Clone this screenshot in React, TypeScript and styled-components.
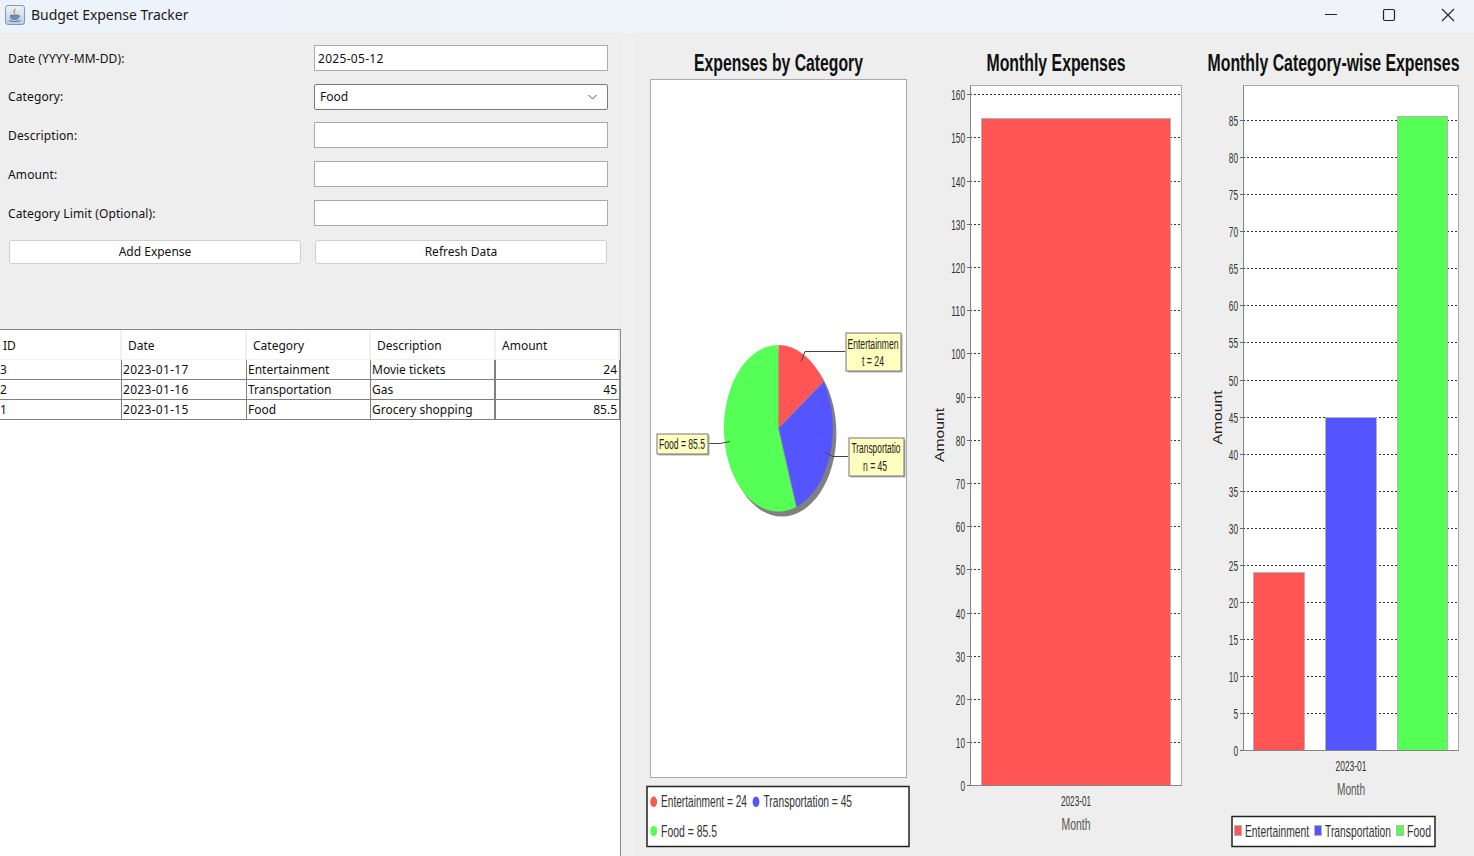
import React from "react";
import styled, { createGlobalStyle } from "styled-components";

const GlobalStyle = createGlobalStyle`
  html, body { margin: 0; padding: 0; height: 100%; overflow: hidden; background: #eeeeee; }
  * { box-sizing: border-box; }
`;

const UI_FONT = `"Noto Sans", "Liberation Sans", sans-serif`;
const CHART_FONT = `"Liberation Sans", Arial, sans-serif`;

const Window = styled.div`
  width: 1474px;
  height: 856px;
  display: flex;
  flex-direction: column;
  overflow: hidden;
  font-family: ${UI_FONT};
  color: #111;
`;

const TitleBar = styled.div`
  height: 33px;
  flex: none;
  display: flex;
  align-items: center;
  padding: 0 3px 4px 5px;
  background: linear-gradient(90deg, #edf3fb, #f1f3f8);
`;

const AppTitle = styled.div`
  margin-left: 6px;
  flex: 1;
  font-size: 14px;
  letter-spacing: -0.05px;
  color: #1a1a1a;
`;

const ControlSlot = styled.div`
  width: 46px;
  height: 20px;
  display: flex;
  align-items: center;
  justify-content: center;
  & + & { margin-left: 12px; }
  &:last-child { margin-left: 13px; }
`;

const Body = styled.div`
  flex: 1;
  display: flex;
  min-height: 0;
`;

const LeftPanel = styled.div`
  width: 621px;
  flex: none;
  display: flex;
  flex-direction: column;
  background: #eeeeee;
`;

const Form = styled.div`
  height: 296px;
  flex: none;
  padding: 11.9px 13px 0 8px;
`;

const Row = styled.div`
  height: 38.75px;
  display: grid;
  grid-template-columns: 306px 294px;
  align-items: start;
`;

const Label = styled.label<{ $tight?: boolean }>`
  font-size: 12px;
  line-height: ${(p) => (p.$tight ? "26px" : "27px")};
  letter-spacing: 0.12px;
  color: #111;
`;

const TextInput = styled.input`
  width: 294px;
  height: 26px;
  padding: 1px 3px 0;
  border: 1px solid #ababab;
  border-radius: 0;
  background: #fff;
  outline: none;
  font: 12px ${UI_FONT};
  letter-spacing: 0.3px;
  color: #111;
`;

const SelectBox = styled.div`
  width: 294px;
  height: 26px;
  padding: 0 10px 0 5px;
  display: flex;
  align-items: center;
  justify-content: space-between;
  border: 1px solid #7a7a7a;
  border-radius: 2px;
  background: #fff;
  font-size: 12px;
`;

const Buttons = styled.div`
  margin-top: 1px;
  padding-left: 1px;
  display: flex;
  gap: 14px;
`;

const Button = styled.button`
  width: 292px;
  height: 24px;
  padding: 0;
  border: 1px solid #d0d0d0;
  border-radius: 3px;
  background: #fff;
  font: 12px ${UI_FONT};
  color: #111;
`;

const TableWrap = styled.div`
  flex: 1;
  overflow: hidden;
  background: #fff;
  border-top: 1px solid #8a8a8a;
  border-right: 1px solid #8a8a8a;
`;

const Table = styled.table`
  margin-left: -2px;
  width: 622px;
  table-layout: fixed;
  border-collapse: separate;
  border-spacing: 0;
  font-size: 12px;
`;

const HeadCell = styled.th`
  height: 30px;
  padding: 2px 0 0 6px;
  text-align: left;
  font-weight: 400;
  background: #fff;
  border-right: 2px solid #f0f0f0;
  border-bottom: 1px solid #f0f0f0;
  &:first-child { padding-left: 5px; }
`;

const Cell = styled.td<{ $numeric?: boolean; $date?: boolean }>`
  height: 20px;
  padding: 0 ${(p) => (p.$numeric ? "2px" : "0")} 0 ${(p) => (p.$numeric ? "0" : "1px")};
  text-align: ${(p) => (p.$numeric ? "right" : "left")};
  letter-spacing: ${(p) => (p.$date ? "0.3px" : "0")};
  white-space: nowrap;
  overflow: hidden;
  border-right: 1px solid #808080;
  border-bottom: 1px solid #808080;
  &:first-child { padding-left: 2px; }
  &:nth-child(4) { border-right-width: 2px; }
`;

const RightPanel = styled.div`
  flex: 1;
  display: flex;
  padding-left: 13px;
  background: #f0f0f0;
`;

const ChartSvg = styled.svg`
  display: block;
  height: 823px;
  flex: none;
  background: #eeeeee;
`;

const ChartTitle = styled.text`
  font: 700 23px ${CHART_FONT};
  fill: #111;
`;

const TickLabel = styled.text`
  font: 15px ${CHART_FONT};
  fill: #333;
`;

const AxisTitle = styled.text`
  font: 16px ${CHART_FONT};
  fill: #555;
`;

const RangeTitle = styled.text`
  font: 13px ${CHART_FONT};
  fill: #222;
`;

const LegendText = styled.text`
  font: 17px ${CHART_FONT};
  fill: #333;
`;

const PieLabelText = styled.text`
  font: 14px ${CHART_FONT};
  fill: #222;
`;

const RED = "#ff5555";
const BLUE = "#5555ff";
const GREEN = "#55ff55";

const JavaIcon = () => (
  <svg width="20" height="20" viewBox="0 0 20 20">
    <defs>
      <linearGradient id="java-bg" x1="0" y1="0" x2="0" y2="1">
        <stop offset="0" stopColor="#eef3f8" />
        <stop offset="1" stopColor="#b9cde0" />
      </linearGradient>
    </defs>
    <rect x="0.5" y="0.5" width="19" height="19" rx="2.5" fill="url(#java-bg)" stroke="#7f9ab5" />
    <path d="M10.5 3c1 1.6-1.6 2.6-.6 4.4.4.7.8 1 .6 1.8-1.6-1-2.9-2-1.9-3.6.5-.8 1.7-1.4 1.9-2.6z" fill="#e2701f" />
    <path d="M5.5 10h8v2.2c0 1.5-1.3 2.3-4 2.3s-4-.8-4-2.3z" fill="#6e8fb0" stroke="#4d6c8c" strokeWidth="0.6" />
    <path d="M13.5 10.6c1.6-.3 1.9 1.6-.3 2" fill="none" stroke="#4d6c8c" strokeWidth="0.8" />
    <path d="M4 15.6c2.6 1.2 8.6 1.2 11.4 0" fill="none" stroke="#4d6c8c" strokeWidth="1" />
  </svg>
);

const MinimizeIcon = () => (
  <svg width="14" height="14" viewBox="0 0 14 14">
    <path d="M1 6.5h12" stroke="#222" strokeWidth="1" />
  </svg>
);

const MaximizeIcon = () => (
  <svg width="14" height="14" viewBox="0 0 14 14">
    <rect x="1.5" y="1.5" width="11" height="11" rx="1.5" fill="none" stroke="#222" strokeWidth="1.2" />
  </svg>
);

const CloseIcon = () => (
  <svg width="14" height="14" viewBox="0 0 14 14">
    <path d="M1 1l12 12M13 1L1 13" stroke="#222" strokeWidth="1.1" />
  </svg>
);

const Chevron = () => (
  <svg width="9" height="6" viewBox="0 0 9 6">
    <path d="M.5 1l4 4 4-4" fill="none" stroke="#555" strokeWidth="1" />
  </svg>
);

interface BarSpec {
  x1: number;
  x2: number;
  value: number;
  color: string;
}

interface BarPlotProps {
  left: number;
  right: number;
  top: number;
  bottom: number;
  perUnit: number;
  step: number;
  max: number;
  bars: BarSpec[];
}

// plot frame, dotted grid, ticks, value labels and the bars
const BarPlot = ({ left, right, top, bottom, perUnit, step, max, bars }: BarPlotProps) => {
  const ticks: number[] = [];
  for (let v = 0; v <= max; v += step) ticks.push(v);
  return (
    <g>
      <rect x={left + 0.5} y={top + 0.5} width={right - left} height={bottom - top} fill="#fff" stroke="#ababab" />
      {ticks.map((v) => {
        const y = Math.round(bottom - v * perUnit + 0.3) + 0.5;
        const label = String(v);
        return (
          <g key={v}>
            {v > 0 && (
              <line x1={left} x2={right} y1={y} y2={y} stroke="#333" strokeDasharray="2 2" />
            )}
            <line x1={left - 3} x2={left} y1={y} y2={y} stroke="#666" />
            <TickLabel
              x={left - 5}
              y={y + 5}
              textAnchor="end"
              textLength={label.length * 4.6}
              lengthAdjust="spacingAndGlyphs"
            >
              {label}
            </TickLabel>
          </g>
        );
      })}
      {bars.map((b) => {
        const y = Math.round(bottom - b.value * perUnit + 0.3);
        return (
          <rect
            key={b.color}
            x={b.x1 + 0.5}
            y={y + 0.5}
            width={b.x2 - b.x1}
            height={bottom - y}
            fill={b.color}
            stroke="#b4b4b4"
          />
        );
      })}
      <line x1={left + 0.5} x2={left + 0.5} y1={top} y2={bottom} stroke="#858585" />
      <line x1={left} x2={right + 1} y1={bottom + 0.5} y2={bottom + 0.5} stroke="#858585" />
    </g>
  );
};

const Narrow = ({
  as: Comp,
  x,
  y,
  w,
  anchor = "middle",
  children,
}: {
  as: typeof LegendText;
  x: number;
  y: number;
  w: number;
  anchor?: "start" | "middle" | "end";
  children: string;
}) => (
  <Comp x={x} y={y} textAnchor={anchor} textLength={w} lengthAdjust="spacingAndGlyphs">
    {children}
  </Comp>
);

const PIE = { cx: 778.4, cy: 428.3, rx: 54.5, ry: 83.3 };
const TOTAL = 154.5;

const piePoint = (value: number) => {
  const a = (value / TOTAL) * Math.PI * 2;
  return `${PIE.cx + PIE.rx * Math.sin(a)} ${PIE.cy - PIE.ry * Math.cos(a)}`;
};

const slice = (from: number, to: number) =>
  `M${PIE.cx} ${PIE.cy}L${piePoint(from)}A${PIE.rx} ${PIE.ry} 0 ${to - from > TOTAL / 2 ? 1 : 0} 1 ${piePoint(to)}Z`;

const PieLabel = ({ x, y, w, h, children }: { x: number; y: number; w: number; h: number; children: React.ReactNode }) => (
  <g>
    <rect x={x + 2} y={y + 2} width={w} height={h} fill="#b0b0b0" />
    <rect x={x + 0.5} y={y + 0.5} width={w} height={h} fill="#ffffc0" stroke="#777" />
    {children}
  </g>
);

const PieChart = () => (
  <ChartSvg width={296} viewBox="634 33 296 823">
    <Narrow as={ChartTitle} x={778.5} y={70.5} w={169}>Expenses by Category</Narrow>
    <rect x={650.5} y={79.5} width={256} height={698} fill="#fff" stroke="#ababab" />

    <ellipse cx={PIE.cx + 3.5} cy={PIE.cy + 5} rx={PIE.rx} ry={PIE.ry} fill="#808080" />
    <path d={slice(0, 24)} fill={RED} />
    <path d={slice(24, 69)} fill={BLUE} />
    <path d={slice(69, TOTAL)} fill={GREEN} />
    <path d="M778.4 428.3L823.5 381.6M778.4 428.3L796.3 507" stroke="#9a9a9a" strokeWidth="0.7" />

    <path d="M845 351.5H805L801 362" fill="none" stroke="#444" />
    <path d="M848 456.5H833L825 452.5" fill="none" stroke="#444" />
    <path d="M708 443.5H720L730 441.5" fill="none" stroke="#444" />

    <PieLabel x={845.5} y={332.5} w={55} h={38}>
      <Narrow as={PieLabelText} x={873} y={348.5} w={51}>Entertainmen</Narrow>
      <Narrow as={PieLabelText} x={873} y={365.5} w={22}>t = 24</Narrow>
    </PieLabel>
    <PieLabel x={848.5} y={437.5} w={55} h={38}>
      <Narrow as={PieLabelText} x={876} y={452.5} w={49}>Transportatio</Narrow>
      <Narrow as={PieLabelText} x={875} y={470.5} w={24}>n = 45</Narrow>
    </PieLabel>
    <PieLabel x={656.5} y={433.5} w={51} h={20}>
      <Narrow as={PieLabelText} x={682} y={448.5} w={46}>Food = 85.5</Narrow>
    </PieLabel>

    <rect x={647} y={786.5} width={262} height={60} fill="#fff" stroke="#222" strokeWidth="1.5" />
    <ellipse cx={653.7} cy={801.7} rx={3.4} ry={5.3} fill={RED} />
    <Narrow as={LegendText} x={661} y={807} w={86} anchor="start">Entertainment = 24</Narrow>
    <ellipse cx={756} cy={801.7} rx={3.4} ry={5.3} fill={BLUE} />
    <Narrow as={LegendText} x={763.5} y={807} w={88.5} anchor="start">Transportation = 45</Narrow>
    <ellipse cx={653.7} cy={831} rx={3.4} ry={5.3} fill={GREEN} />
    <Narrow as={LegendText} x={661} y={837} w={56} anchor="start">Food = 85.5</Narrow>
  </ChartSvg>
);

const MonthlyChart = () => (
  <ChartSvg width={260} viewBox="930 33 260 823">
    <Narrow as={ChartTitle} x={1056} y={70.5} w={139}>Monthly Expenses</Narrow>
    <BarPlot
      left={970}
      right={1181}
      top={85}
      bottom={785}
      perUnit={4.319}
      step={10}
      max={160}
      bars={[{ x1: 981, x2: 1170, value: 154.5, color: RED }]}
    />
    <Narrow as={TickLabel} x={1076} y={805.5} w={30}>2023-01</Narrow>
    <Narrow as={AxisTitle} x={1076} y={830} w={29}>Month</Narrow>
    <g transform="translate(944 435) rotate(-90)">
      <Narrow as={RangeTitle} x={0} y={0} w={54}>Amount</Narrow>
    </g>
  </ChartSvg>
);

const CategoryChart = () => (
  <ChartSvg width={284} viewBox="1190 33 284 823">
    <Narrow as={ChartTitle} x={1333.5} y={70.5} w={252}>Monthly Category-wise Expenses</Narrow>
    <BarPlot
      left={1243}
      right={1458}
      top={85}
      bottom={750}
      perUnit={7.415}
      step={5}
      max={85}
      bars={[
        { x1: 1253, x2: 1304, value: 24, color: RED },
        { x1: 1325, x2: 1376, value: 45, color: BLUE },
        { x1: 1397, x2: 1447, value: 85.5, color: GREEN },
      ]}
    />
    <Narrow as={TickLabel} x={1351} y={770.5} w={31}>2023-01</Narrow>
    <Narrow as={AxisTitle} x={1351} y={795} w={28}>Month</Narrow>
    <g transform="translate(1222 417.5) rotate(-90)">
      <Narrow as={RangeTitle} x={0} y={0} w={54}>Amount</Narrow>
    </g>

    <rect x={1232} y={816.5} width={203} height={30} fill="#fff" stroke="#222" strokeWidth="1.5" />
    <rect x={1234.5} y={825.5} width={7} height={10} fill={RED} stroke="#b4b4b4" />
    <Narrow as={LegendText} x={1245} y={837} w={64} anchor="start">Entertainment</Narrow>
    <rect x={1314.5} y={825.5} width={7} height={10} fill={BLUE} stroke="#b4b4b4" />
    <Narrow as={LegendText} x={1325} y={837} w={66} anchor="start">Transportation</Narrow>
    <rect x={1396.5} y={825.5} width={7} height={10} fill={GREEN} stroke="#b4b4b4" />
    <Narrow as={LegendText} x={1407} y={837} w={24} anchor="start">Food</Narrow>
  </ChartSvg>
);

const EXPENSES = [
  { id: 3, date: "2023-01-17", category: "Entertainment", description: "Movie tickets", amount: "24" },
  { id: 2, date: "2023-01-16", category: "Transportation", description: "Gas", amount: "45" },
  { id: 1, date: "2023-01-15", category: "Food", description: "Grocery shopping", amount: "85.5" },
];

const COLUMNS: [string, number][] = [
  ["ID", 124],
  ["Date", 125],
  ["Category", 124],
  ["Description", 125],
  ["Amount", 124],
];

export default function App() {
  return (
    <Window>
      <GlobalStyle />
      <TitleBar>
        <JavaIcon />
        <AppTitle>Budget Expense Tracker</AppTitle>
        <ControlSlot><MinimizeIcon /></ControlSlot>
        <ControlSlot><MaximizeIcon /></ControlSlot>
        <ControlSlot><CloseIcon /></ControlSlot>
      </TitleBar>
      <Body>
        <LeftPanel>
          <Form>
            <Row>
              <Label>Date (YYYY-MM-DD):</Label>
              <TextInput readOnly value="2025-05-12" />
            </Row>
            <Row>
              <Label $tight>Category:</Label>
              <SelectBox>
                Food
                <Chevron />
              </SelectBox>
            </Row>
            <Row>
              <Label>Description:</Label>
              <TextInput readOnly value="" />
            </Row>
            <Row>
              <Label>Amount:</Label>
              <TextInput readOnly value="" />
            </Row>
            <Row>
              <Label>Category Limit (Optional):</Label>
              <TextInput readOnly value="" />
            </Row>
            <Buttons>
              <Button>Add Expense</Button>
              <Button>Refresh Data</Button>
            </Buttons>
          </Form>
          <TableWrap>
            <Table>
              <colgroup>
                {COLUMNS.map(([name, width]) => (
                  <col key={name} width={width} />
                ))}
              </colgroup>
              <thead>
                <tr>
                  {COLUMNS.map(([name]) => (
                    <HeadCell key={name}>{name}</HeadCell>
                  ))}
                </tr>
              </thead>
              <tbody>
                {EXPENSES.map((e) => (
                  <tr key={e.id}>
                    <Cell>{e.id}</Cell>
                    <Cell $date>{e.date}</Cell>
                    <Cell>{e.category}</Cell>
                    <Cell>{e.description}</Cell>
                    <Cell $numeric>{e.amount}</Cell>
                  </tr>
                ))}
              </tbody>
            </Table>
          </TableWrap>
        </LeftPanel>
        <RightPanel>
          <PieChart />
          <MonthlyChart />
          <CategoryChart />
        </RightPanel>
      </Body>
    </Window>
  );
}
